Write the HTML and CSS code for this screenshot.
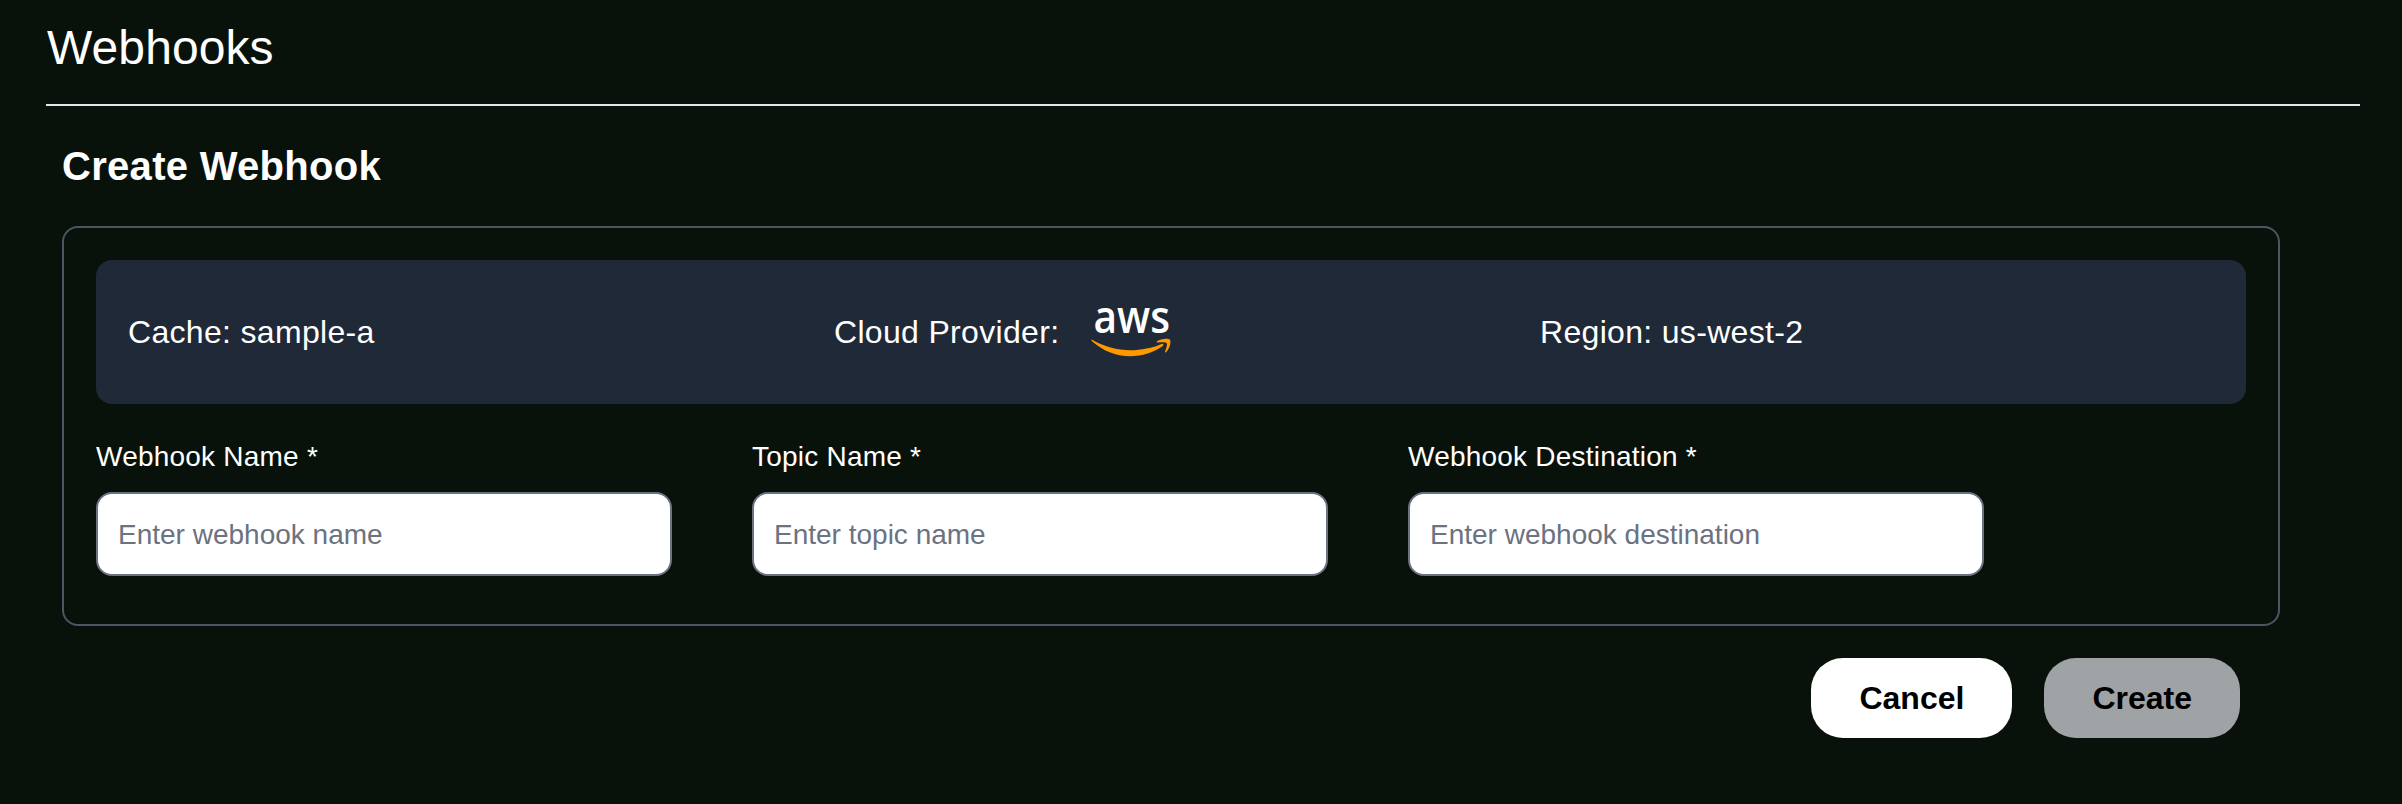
FILE: index.html
```html
<!DOCTYPE html>
<html lang="en">
<head>
<meta charset="utf-8">
<title>Webhooks</title>
<link rel="stylesheet" href="styles.css">
</head>
<body>
<main class="page">
  <h1 class="page-title">Webhooks</h1>
  <section class="content">
    <h2 class="section-title">Create Webhook</h2>
    <form class="card">
      <div class="summary">
        <div class="summary-item">Cache: sample-a</div>
        <div class="summary-item">
          <span>Cloud Provider:</span>
          <svg class="aws" width="92" height="90" viewBox="0 -19 92 90" role="img" aria-label="aws">
            <text class="aws-word" x="2.5" y="28.4" textLength="76.500" lengthAdjust="spacingAndGlyphs">aws</text>
            <path class="aws-smile" d="M1.2 34.7C13 41.5 26 45.200 39.500 45.200C50 45.200 61.500 42.800 70.500 38.900C72 38.300 73.300 39.900 71.800 41C63 47.500 51 51.200 39.300 51.200C25 51.200 11.500 45.800 1 36.300C0 35.400 .4 34.300 1.200 34.700Z"/>
            <path class="aws-smile" d="M66 36.300C69.500 33.500 77.500 33 79 34.700C80.400 36.500 78.600 43.800 75.100 47.200C74.600 47.700 73.800 47.300 74 46.700C75.100 44 76.600 39.500 75.700 38.300C74.700 37 70.200 37.200 66.700 37.600C65.700 37.700 65.400 36.900 66 36.300Z"/>
          </svg>
        </div>
        <div class="summary-item">Region: us-west-2</div>
      </div>
      <div class="fields">
        <label class="field"><span class="label">Webhook Name <span class="required">*</span></span><input class="input" type="text" placeholder="Enter webhook name"></label>
        <label class="field"><span class="label">Topic Name <span class="required">*</span></span><input class="input" type="text" placeholder="Enter topic name"></label>
        <label class="field"><span class="label">Webhook Destination <span class="required">*</span></span><input class="input" type="text" placeholder="Enter webhook destination"></label>
      </div>
    </form>
    <div class="actions">
      <button class="button" type="button">Cancel</button>
      <button class="button button-disabled" type="button" disabled>Create</button>
    </div>
  </section>
</main>
</body>
</html>
```

FILE: styles.css
```css
* { box-sizing: border-box; }
body {
  margin: 0;
  background: #08120b;
  color: #fff;
  font-family: "Liberation Sans", Arial, sans-serif;
}
.page {
  height: 804px;
  padding: 0 42px 0 46px;
  overflow: hidden;
}
.page-title {
  height: 106px;
  margin: 0;
  padding: 20px 0 0 1px;
  border-bottom: 2px solid #e5e7eb;
  font-size: 48px;
  font-weight: 400;
  line-height: 56px;
  letter-spacing: .1px;
}
.content { padding: 0 80px 0 16px; }
.section-title {
  margin: 0;
  padding: 36px 0;
  font-size: 40px;
  line-height: 48px;
  letter-spacing: .3px;
}
.card {
  height: 400px;
  padding: 32px;
  border: 2px solid #4b5563;
  border-radius: 16px;
}
.summary {
  display: grid;
  grid-template-columns: repeat(3, 1fr);
  gap: 32px;
  align-items: center;
  height: 144px;
  padding: 0 32px;
  border-radius: 16px;
  background: #202937;
  font-size: 32px;
  letter-spacing: .32px;
}
.summary-item {
  display: flex;
  align-items: center;
  gap: 32px;
}
.aws { flex: none; margin-top: -2px; }
.aws-word {
  fill: #fff;
  font-family: "Open Sans", sans-serif;
  font-size: 44.5px;
  font-weight: 600;
  letter-spacing: 0;
}
.aws-smile { fill: #f90; }
.fields {
  display: flex;
  gap: 80px;
  padding-top: 33px;
}
.field {
  display: flex;
  flex-direction: column;
  gap: 15px;
  width: 576px;
  font-size: 28px;
  line-height: 40px;
}
.label { letter-spacing: .22px; }
.input {
  width: 100%;
  height: 84px;
  padding: 2px 20px 0;
  border: 2px solid #6b7280;
  border-radius: 16px;
  background: #fff;
  color: #111827;
  font: inherit;
}
.input::placeholder { color: #6b7280; opacity: 1; }
.actions {
  display: flex;
  justify-content: flex-end;
  gap: 32px;
  padding: 32px 40px 0 0;
}
.button {
  height: 80px;
  padding: 0 48px;
  border: 0;
  border-radius: 32px;
  background: #fff;
  color: #000;
  font: bold 32px "Liberation Sans", Arial, sans-serif;
}
.button-disabled { background: #9fa3a6; }
```
